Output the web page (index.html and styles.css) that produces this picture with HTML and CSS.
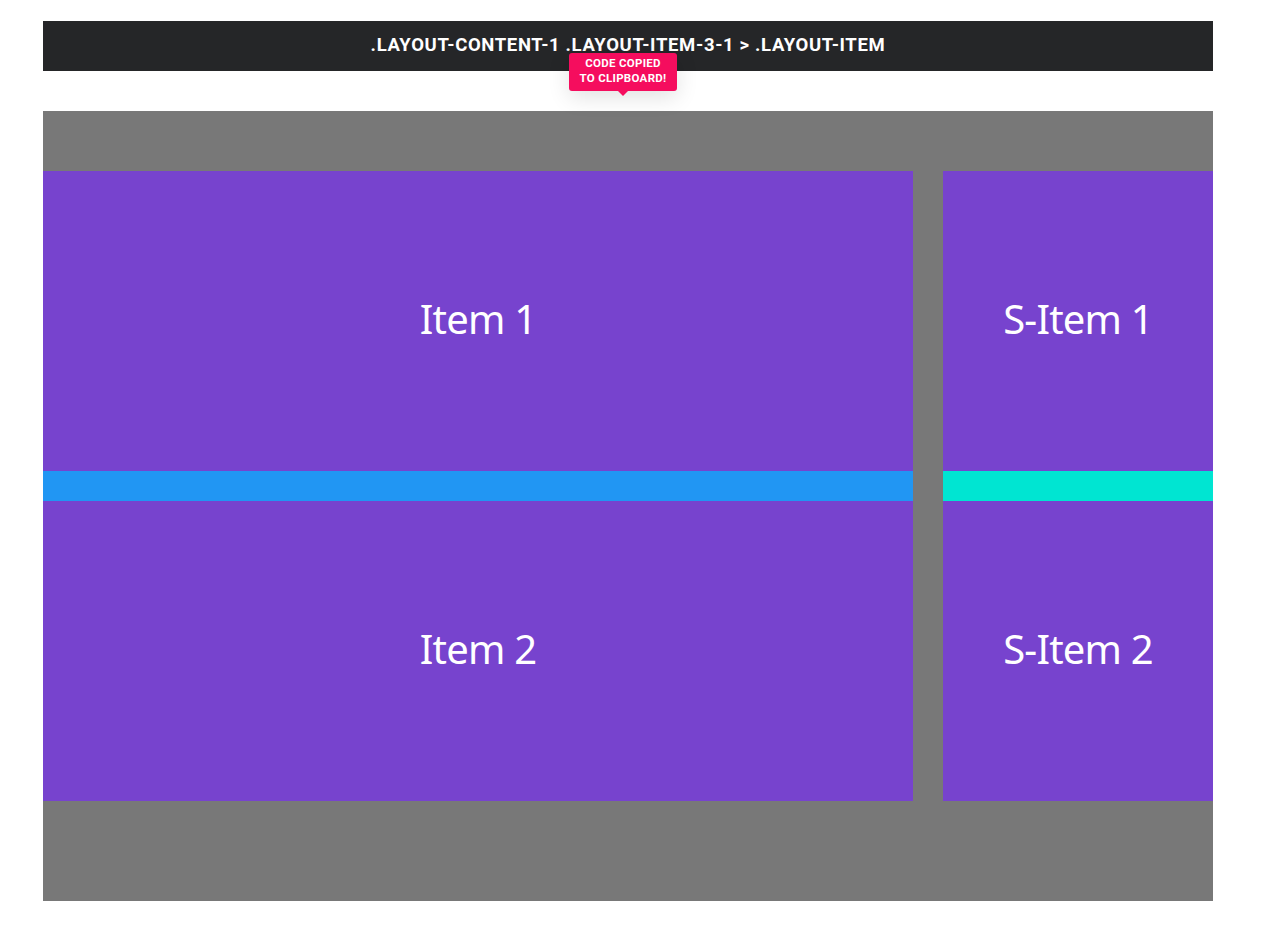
FILE: index.html
```html
<!DOCTYPE html>
<html>
<head>
<meta charset="utf-8">
<link rel="stylesheet" href="styles.css">
</head>
<body>
<div class="page">
  <div class="header">
    <span class="selector">.LAYOUT-CONTENT-1 .LAYOUT-ITEM-3-1 &gt; .LAYOUT-ITEM</span>
    <div class="tooltip">CODE COPIED<br>TO CLIPBOARD!</div>
  </div>
  <div class="stage">
    <div class="col col-main">
      <div class="item">Item 1</div>
      <div class="sep sep-blue"></div>
      <div class="item">Item 2</div>
    </div>
    <div class="col col-side">
      <div class="item">S-Item 1</div>
      <div class="sep sep-cyan"></div>
      <div class="item">S-Item 2</div>
    </div>
  </div>
</div>
</body>
</html>
```
FILE: styles.css
```css
html, body {
  margin: 0;
  padding: 0;
  background: #fff;
}
body {
  font-family: "Open Sans", "Noto Sans", sans-serif;
}
.page {
  width: 1170px;
  padding: 21px 0 0 43px;
}
.header {
  position: relative;
  height: 50px;
  background: #252628;
  display: flex;
  align-items: center;
  justify-content: center;
  margin-bottom: 40px;
}
.selector {
  color: #fff;
  font-weight: 700;
  font-size: 18.5px;
  letter-spacing: 0.65px;
  font-family: "Roboto", sans-serif;
  margin-top: -2px;
}
.tooltip {
  position: absolute;
  left: 526px;
  top: 32px;
  width: 108px;
  height: 38px;
  box-sizing: border-box;
  background: #f50d5e;
  border-radius: 3px;
  color: #fff;
  font-family: "Roboto", sans-serif;
  font-weight: 700;
  font-size: 11.5px;
  letter-spacing: 0.3px;
  line-height: 15px;
  text-align: center;
  padding-top: 3px;
  box-shadow: 0 6px 22px rgba(0,0,0,0.12);
  z-index: 2;
}
.tooltip::after {
  content: "";
  position: absolute;
  left: 49px;
  bottom: -5px;
  border-left: 5px solid transparent;
  border-right: 5px solid transparent;
  border-top: 5px solid #f50d5e;
}
.stage {
  background: #787878;
  padding: 60px 0 100px;
  display: flex;
  gap: 30px;
}
.col {
  display: flex;
  flex-direction: column;
}
.col-main {
  width: 870px;
}
.col-side {
  flex: 1;
}
.item {
  height: 300px;
  box-sizing: border-box;
  padding-bottom: 6px;
  background: #7743ce;
  color: #fff;
  display: flex;
  align-items: center;
  justify-content: center;
  font-size: 40px;
  font-weight: 400;
  font-family: "Noto Sans", sans-serif;
  letter-spacing: -0.8px;
}
.sep {
  height: 30px;
}
.sep-blue {
  background: #2196f3;
}
.sep-cyan {
  background: #00e5d2;
}
```
